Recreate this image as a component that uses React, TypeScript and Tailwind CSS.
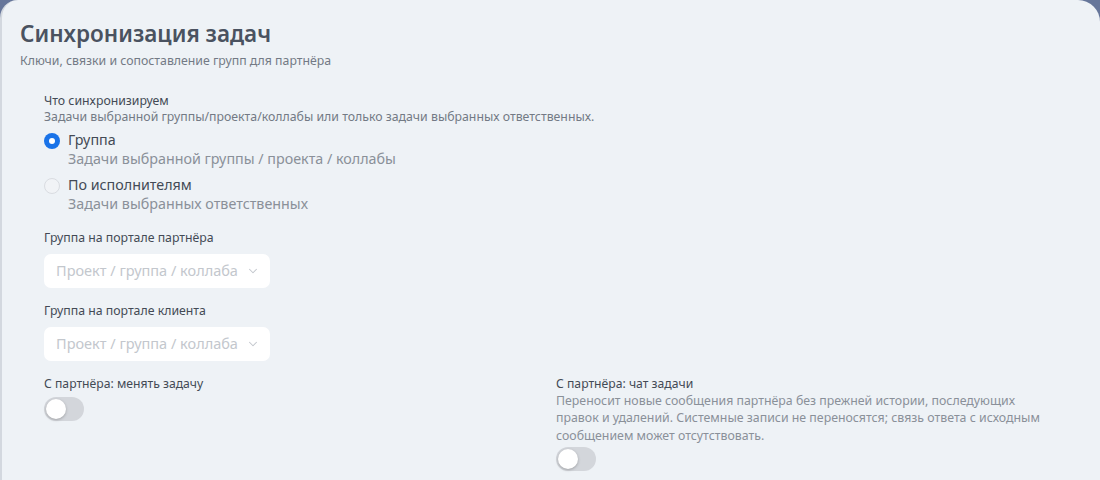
import React from "react";

function Toggle() {
  return (
    <div className="w-[40px] h-[24px] rounded-full bg-[#d3d6db] p-[2px] flex items-center">
      <div className="w-[20px] h-[20px] rounded-full bg-white shadow-[0_1px_3px_rgba(0,0,0,0.25)]" />
    </div>
  );
}

function Select() {
  return (
    <div className="w-[226px] h-[34px] rounded-[7px] bg-white flex items-center justify-between pl-3 pr-[10px]">
      <span className="text-[14.5px] text-[#c3c7cd]">Проект / группа / коллаба</span>
      <svg width="14" height="14" viewBox="0 0 24 24" fill="none" stroke="#c3c7cd" strokeWidth="1.8" strokeLinecap="round" strokeLinejoin="round">
        <path d="M6 9l6 6 6-6" />
      </svg>
    </div>
  );
}

export default function App() {
  return (
    <div className="w-[1100px] h-[480px] bg-[#66769a] overflow-hidden" style={{ fontFamily: '"Noto Sans", "Open Sans", sans-serif' }}>
      <div className="h-full bg-[#eef2f6] rounded-tl-[18px] rounded-tr-[22px] border-l-2 border-[#d3d8df] pl-[18px] pr-5 pt-[18px]">
        <h1 className="text-[22.5px] leading-[32px] font-semibold text-[#4a5260]">Синхронизация задач</h1>
        <p className="text-[12.3px] leading-[16px] text-[#737a85] mt-[3px]">Ключи, связки и сопоставление групп для партнёра</p>

        <div className="pl-6 pr-6 mt-[24px]">
          <div className="text-[12.3px] leading-[16px] text-[#434a55]">Что синхронизируем</div>
          <div className="text-[12.3px] leading-[16px] text-[#737a85]">Задачи выбранной группы/проекта/коллабы или только задачи выбранных ответственных.</div>

          <div className="mt-[6px] flex flex-col gap-[8px]">
            <div className="flex items-start gap-2">
              <div className="mt-[2px] w-[16px] h-[16px] rounded-full bg-[#1a73e8] flex items-center justify-center">
                <div className="w-[6px] h-[6px] rounded-full bg-white" />
              </div>
              <div>
                <div className="text-[14.3px] leading-[18px] text-[#434a55]">Группа</div>
                <div className="text-[14.3px] leading-[19px] text-[#8a9099]">Задачи выбранной группы / проекта / коллабы</div>
              </div>
            </div>
            <div className="flex items-start gap-2">
              <div className="mt-[2px] w-[16px] h-[16px] rounded-full border border-[#d9dce1] bg-[#f1f3f6]" />
              <div>
                <div className="text-[14.3px] leading-[18px] text-[#434a55]">По исполнителям</div>
                <div className="text-[14.3px] leading-[19px] text-[#8a9099]">Задачи выбранных ответственных</div>
              </div>
            </div>
          </div>

          <div className="mt-[17px] text-[12.3px] leading-[16px] text-[#434a55]">Группа на портале партнёра</div>
          <div className="mt-[8px]"><Select /></div>

          <div className="mt-[15px] text-[12.3px] leading-[16px] text-[#434a55]">Группа на портале клиента</div>
          <div className="mt-[8px]"><Select /></div>

          <div className="mt-[15px] grid grid-cols-2 gap-3">
            <div>
              <div className="text-[12.2px] leading-[16px] text-[#434a55]">С партнёра: менять задачу</div>
              <div className="mt-[5px]"><Toggle /></div>
            </div>
            <div>
              <div className="text-[12.2px] leading-[16px] text-[#434a55]">С партнёра: чат задачи</div>
              <div className="text-[12.35px] leading-[17.3px] text-[#8a9099] max-w-[500px]">Переносит новые сообщения партнёра без прежней истории, последующих правок и удалений. Системные записи не переносятся; связь ответа с исходным сообщением может отсутствовать.</div>
              <div className="mt-[3px]"><Toggle /></div>
            </div>
          </div>
        </div>
      </div>
    </div>
  );
}
